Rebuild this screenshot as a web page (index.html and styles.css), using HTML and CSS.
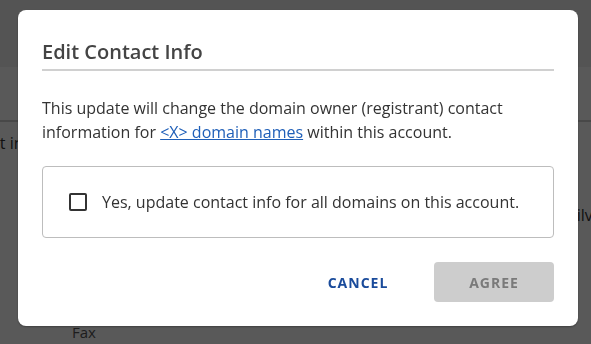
FILE: index.html
```html
<!DOCTYPE html>
<html lang="en">
<head>
    <meta charset="UTF-8">
    <meta name="viewport" content="width=device-width, initial-scale=1.0">
    <title>Edit Contact Info</title>
    <link rel="stylesheet" href="styles.css">
</head>
<body>
    <div class="page">
        <div class="page-header"></div>
        <div class="page-tabs"></div>
        <div class="page-row">
            <span class="field-left">Contact info</span>
        </div>
        <div class="page-row right">
            <span>Silver</span>
        </div>
        <div class="page-row fax">
            <span>Fax</span>
        </div>
    </div>

    <div class="overlay">
        <div class="dialog">
            <h2 class="dialog-title">Edit Contact Info</h2>
            <p class="dialog-text">
                This update will change the domain owner (registrant) contact
                information for <a href="#">&lt;X&gt; domain names</a> within this account.
            </p>
            <label class="confirm">
                <span class="box"></span>
                <span>Yes, update contact info for all domains on this account.</span>
            </label>
            <div class="actions">
                <button class="btn cancel">CANCEL</button>
                <button class="btn agree" disabled>AGREE</button>
            </div>
        </div>
    </div>
</body>
</html>
```

FILE: styles.css
```css
* {
    margin: 0;
    padding: 0;
    box-sizing: border-box;
}

body {
    font-family: "Open Sans", "Liberation Sans", sans-serif;
    background: #ffffff;
    color: #333;
    width: 591px;
    height: 344px;
    overflow: hidden;
}

/* page under the overlay */
.page {
    height: 344px;
    overflow: hidden;
}

.page-header {
    height: 67px;
    background: #f0f0f0;
}

.page-tabs {
    height: 55px;
    border-bottom: 2px solid #cfcfcf;
}

.page-row {
    font-size: 16px;
    height: 40px;
    padding-top: 10px;
    white-space: nowrap;
}

.field-left {
    margin-left: -52px;
}

.page-row.right {
    height: 150px;
    padding: 42px 0 0 568px;
}

.page-row.fax {
    padding: 10px 0 0 72px;
    font-size: 15px;
    color: #555;
}

/* modal */
.overlay {
    position: fixed;
    top: 0;
    left: 0;
    right: 0;
    bottom: 0;
    background: rgba(0, 0, 0, 0.65);
    display: flex;
    align-items: flex-start;
    padding: 10px 0 0 18px;
}

.dialog {
    width: 560px;
    height: 316px;
    background: #fff;
    border-radius: 8px;
    box-shadow: 0 1px 2px rgba(0, 0, 0, 0.3);
    padding: 28px 24px 24px;
}

.dialog-title {
    font-size: 20px;
    font-weight: 600;
    color: #444;
    line-height: 28px;
    padding-bottom: 3px;
    border-bottom: 2px solid #d0d0d0;
}

.dialog-text {
    font-size: 16px;
    line-height: 24px;
    color: #333;
    margin-top: 25px;
}

.dialog-text a {
    color: #1f5fb8;
}

.confirm {
    display: flex;
    align-items: center;
    gap: 15px;
    margin-top: 22px;
    height: 72px;
    padding: 0 26px;
    border: 1px solid #bdbdbd;
    border-radius: 4px;
    font-size: 16px;
    color: #333;
}

.box {
    width: 18px;
    height: 18px;
    border: 2px solid #333;
    border-radius: 2px;
    flex-shrink: 0;
}

.actions {
    display: flex;
    justify-content: flex-end;
    gap: 16px;
    margin-top: 24px;
}

.btn {
    width: 120px;
    height: 40px;
    border: none;
    border-radius: 4px;
    font-family: "Open Sans", "Liberation Sans", sans-serif;
    font-size: 14px;
    font-weight: 700;
    letter-spacing: 1px;
    cursor: pointer;
}

.btn.cancel {
    background: transparent;
    color: #1a4b9b;
}

.btn.agree {
    background: #cdcdcd;
    color: #7a7a7a;
}
```
